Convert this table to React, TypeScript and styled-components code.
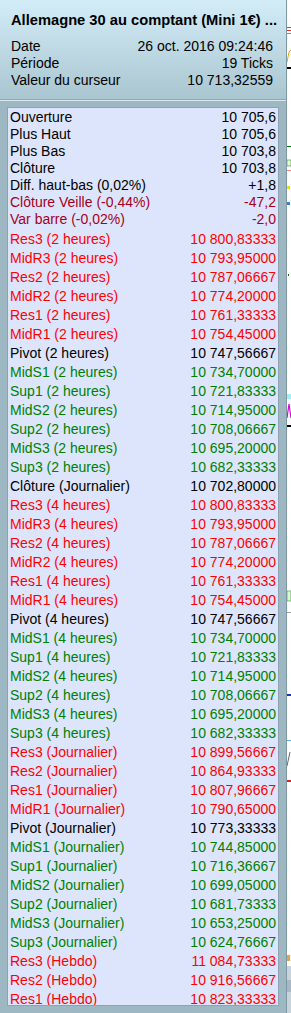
import styled, { createGlobalStyle } from "styled-components";

const GlobalStyle = createGlobalStyle`
  html, body {
    margin: 0;
    padding: 0;
    background: #ffffff;
  }
  body {
    font-family: "Liberation Sans", Arial, sans-serif;
  }
`;

type Tone = "base" | "dark" | "red" | "green";

const toneColors: Record<Tone, string> = {
  base: "#000000",
  dark: "#a50021",
  red: "#ff0000",
  green: "#008000",
};

const Screen = styled.div`
  display: flex;
  width: 291px;
  height: 1013px;
  overflow: hidden;
`;

const Panel = styled.div`
  width: 286px;
  flex: none;
  display: flex;
  flex-direction: column;
  background: #9db7c3;
  border-right: 1px solid #7e98a4;
`;

const Header = styled.div`
  height: 88px;
  padding: 12px 13px 0 11px;
  background: linear-gradient(#d3edf8, #a9c5d0);
  border-bottom: 1px solid #dbe8ee;
  box-shadow: inset 0 -1px 0 #8ea8b4;
  color: #000;
  font-size: 14px;
`;

const Title = styled.div`
  font-weight: bold;
  font-size: 14.7px;
  line-height: 17px;
  white-space: nowrap;
  margin-bottom: 9px;
`;

const InfoRow = styled.div`
  display: flex;
  justify-content: space-between;
  line-height: 17px;
  white-space: nowrap;
`;

const Body = styled.div`
  flex: 1;
  padding: 6px 7px 0 7px;
`;

const ListBox = styled.div`
  background: #dce5fc;
  border: 1px solid #8ea2b2;
  padding: 1px 2px 0 2px;
  height: 899px;
  box-sizing: border-box;
  overflow: hidden;
  font-size: 14px;
`;

const Section = styled.div<{ $gap?: number }>`
  display: flex;
  flex-direction: column;
  margin-top: ${(p) => p.$gap ?? 0}px;
`;

const Row = styled.div<{ $tone: Tone; $compact?: boolean }>`
  display: flex;
  justify-content: space-between;
  height: ${(p) => (p.$compact ? 17 : 19)}px;
  line-height: ${(p) => (p.$compact ? 17 : 19)}px;
  color: ${(p) => toneColors[p.$tone]};
  white-space: nowrap;
`;

const ChartStrip = styled.svg`
  flex: none;
  width: 4px;
  height: 1013px;
  background: #ffffff;
`;

type Item = [string, string, Tone];

const top: Item[] = [
  ["Ouverture", "10 705,6", "base"],
  ["Plus Haut", "10 705,6", "base"],
  ["Plus Bas", "10 703,8", "base"],
  ["Clôture", "10 703,8", "base"],
  ["Diff. haut-bas (0,02%)", "+1,8", "base"],
  ["Clôture Veille (-0,44%)", "-47,2", "dark"],
  ["Var barre (-0,02%)", "-2,0", "dark"],
];

const pivots = (label: string, v: string[]): Item[] => {
  const names = ["Res3", "MidR3", "Res2", "MidR2", "Res1", "MidR1", "Pivot", "MidS1", "Sup1", "MidS2", "Sup2", "MidS3", "Sup3"];
  const tones: Tone[] = ["red", "red", "red", "red", "red", "red", "base", "green", "green", "green", "green", "green", "green"];
  return names.map((n, i) => [`${n} (${label})`, v[i], tones[i]] as Item);
};

const levels: Item[] = [
  ...pivots("2 heures", [
    "10 800,83333", "10 793,95000", "10 787,06667", "10 774,20000", "10 761,33333", "10 754,45000",
    "10 747,56667", "10 734,70000", "10 721,83333", "10 714,95000", "10 708,06667", "10 695,20000", "10 682,33333",
  ]),
  ["Clôture (Journalier)", "10 702,80000", "base"],
  ...pivots("4 heures", [
    "10 800,83333", "10 793,95000", "10 787,06667", "10 774,20000", "10 761,33333", "10 754,45000",
    "10 747,56667", "10 734,70000", "10 721,83333", "10 714,95000", "10 708,06667", "10 695,20000", "10 682,33333",
  ]),
  ["Res3 (Journalier)", "10 899,56667", "red"],
  ["Res2 (Journalier)", "10 864,93333", "red"],
  ["Res1 (Journalier)", "10 807,96667", "red"],
  ["MidR1 (Journalier)", "10 790,65000", "red"],
  ["Pivot (Journalier)", "10 773,33333", "base"],
  ["MidS1 (Journalier)", "10 744,85000", "green"],
  ["Sup1 (Journalier)", "10 716,36667", "green"],
  ["MidS2 (Journalier)", "10 699,05000", "green"],
  ["Sup2 (Journalier)", "10 681,73333", "green"],
  ["MidS3 (Journalier)", "10 653,25000", "green"],
  ["Sup3 (Journalier)", "10 624,76667", "green"],
  ["Res3 (Hebdo)", "11 084,73333", "red"],
  ["Res2 (Hebdo)", "10 916,56667", "red"],
  ["Res1 (Hebdo)", "10 823,33333", "red"],
];

export default function App() {
  return (
    <>
      <GlobalStyle />
      <Screen>
        <Panel>
          <Header>
            <Title>Allemagne 30 au comptant (Mini 1€) ...</Title>
            <InfoRow>
              <span>Date</span>
              <span>26 oct. 2016 09:24:46</span>
            </InfoRow>
            <InfoRow>
              <span>Période</span>
              <span>19 Ticks</span>
            </InfoRow>
            <InfoRow>
              <span>Valeur du curseur</span>
              <span>10 713,32559</span>
            </InfoRow>
          </Header>
          <Body>
            <ListBox>
              <Section>
                {top.map(([l, v, t]) => (
                  <Row key={l} $tone={t} $compact>
                    <span>{l}</span>
                    <span>{v}</span>
                  </Row>
                ))}
              </Section>
              <Section $gap={2}>
                {levels.map(([l, v, t], i) => (
                  <Row key={i} $tone={t}>
                    <span>{l}</span>
                    <span>{v}</span>
                  </Row>
                ))}
              </Section>
            </ListBox>
          </Body>
        </Panel>
        {/* bit of the price chart peeking out behind the tooltip */}
        <ChartStrip viewBox="0 0 4 1013">
          <rect x="0" y="27" width="4" height="1" fill="#2a9a2a" />
          <rect x="0" y="30" width="4" height="1" fill="#e03030" />
          <rect x="0" y="33" width="4" height="1" fill="#6a8ad0" />
          <path d="M0 62 L2 52 L4 50" stroke="#e8a020" strokeWidth="1" fill="none" />
          <rect x="0" y="67" width="4" height="2" fill="#000" />
          <rect x="0" y="146" width="4" height="1" fill="#007a00" />
          <rect x="0" y="160" width="4" height="6" fill="#e8f8d8" stroke="#2a9a2a" strokeWidth="0.6" />
          <rect x="0" y="170" width="4" height="1" fill="#ff8080" />
          <rect x="0" y="186" width="3" height="3" fill="#f0e000" />
          <rect x="0" y="202" width="3" height="3" fill="#3080e0" />
          <rect x="1" y="274" width="1" height="2" fill="#007a00" />
          <rect x="0" y="394" width="4" height="5" fill="#a0f0f8" />
          <path d="M0 418 L2 404 L4 418" stroke="#e000e0" strokeWidth="1.2" fill="none" />
          <rect x="0" y="425" width="4" height="2" fill="#000" />
          <rect x="0" y="591" width="4" height="10" fill="#d8f8d0" stroke="#2a9a2a" strokeWidth="0.6" />
          <rect x="0" y="612" width="4" height="1" fill="#a0a0a0" />
          <rect x="0" y="694" width="4" height="2" fill="#2030c0" />
          <rect x="0" y="740" width="4" height="1" fill="#60b0e0" />
          <path d="M0 766 L3 752" stroke="#404040" strokeWidth="0.8" />
          <rect x="0" y="780" width="4" height="2" fill="#e02020" />
          <rect x="0" y="955" width="3" height="6" fill="#f0a040" />
          <rect x="0" y="966" width="4" height="47" fill="#c8d4dc" />
          <rect x="0" y="980" width="4" height="12" fill="#a8b8c4" />
        </ChartStrip>
      </Screen>
    </>
  );
}
